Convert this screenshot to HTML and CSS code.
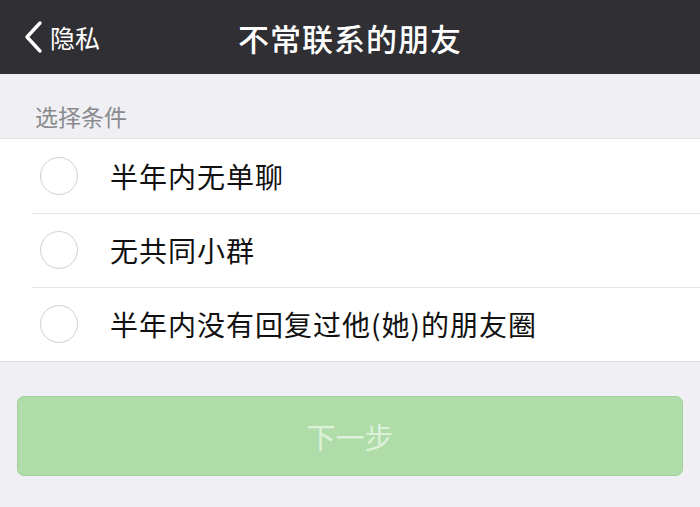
FILE: index.html
```html
<!DOCTYPE html>
<html lang="zh-CN">
<head>
  <meta charset="UTF-8" />
  <meta name="viewport" content="width=device-width, initial-scale=1.0" />
  <title>不常联系的朋友</title>
  <link rel="stylesheet" href="styles.css">
</head>
<body>
  <header class="topbar">
    <a class="back" href="#">
      <svg class="chevron" width="19" height="34" viewBox="0 0 19 34">
        <path d="M16 3 L3 17 L16 31" fill="none" stroke="#fff" stroke-width="3.4" stroke-linecap="round" stroke-linejoin="round"/>
      </svg>
      <span>隐私</span>
    </a>
    <h1>不常联系的朋友</h1>
  </header>

  <div class="section-title">选择条件</div>

  <ul class="options">
    <li class="option"><span class="radio"></span><span class="label">半年内无单聊</span></li>
    <li class="option"><span class="radio"></span><span class="label">无共同小群</span></li>
    <li class="option"><span class="radio"></span><span class="label">半年内没有回复过他(她)的朋友圈</span></li>
  </ul>

  <div class="actions">
    <button class="next" disabled>下一步</button>
  </div>
</body>
</html>
```

FILE: styles.css
```css
body {
  font-family: "Noto Sans CJK SC", "Noto Sans", sans-serif;
  margin: 0;
  padding: 0;
  background-color: #efeff4;
  color: #111;
}
.topbar {
  position: relative;
  height: 74px;
  background-color: #2f2f34;
  display: flex;
  align-items: center;
  justify-content: center;
}
.topbar h1 {
  margin: 0;
  color: #fff;
  font-size: 31px;
  font-weight: 500;
  letter-spacing: 1px;
}
.back {
  position: absolute;
  left: 24px;
  top: 0;
  height: 74px;
  display: flex;
  align-items: center;
  gap: 7px;
  color: #fff;
  text-decoration: none;
  font-size: 25px;
}
.section-title {
  height: 64px;
  box-sizing: border-box;
  padding: 26px 0 0 35px;
  font-size: 23px;
  line-height: 32px;
  color: #8a8a8e;
}
.options {
  list-style: none;
  margin: 0;
  padding: 0;
  background-color: #fff;
  border-top: 1px solid #e3e3e6;
  border-bottom: 1px solid #dcdce0;
}
.option {
  height: 74px;
  display: flex;
  align-items: center;
  padding-left: 40px;
  position: relative;
}
.option + .option::before {
  content: "";
  position: absolute;
  left: 32px;
  right: 0;
  top: 0;
  border-top: 1px solid #e6e6e8;
}
.radio {
  width: 36px;
  height: 36px;
  border: 1.5px solid #d2d2d4;
  border-radius: 50%;
}
.label {
  margin-left: 32px;
  font-size: 28px;
  letter-spacing: 1px;
}
.actions {
  padding: 34px 17px;
}
.next {
  display: block;
  width: 100%;
  height: 80px;
  background-color: #afdca9;
  border: 1px solid #a3cf9d;
  border-radius: 7px;
  color: #dcf2d8;
  font-family: inherit;
  font-size: 29px;
}
```
